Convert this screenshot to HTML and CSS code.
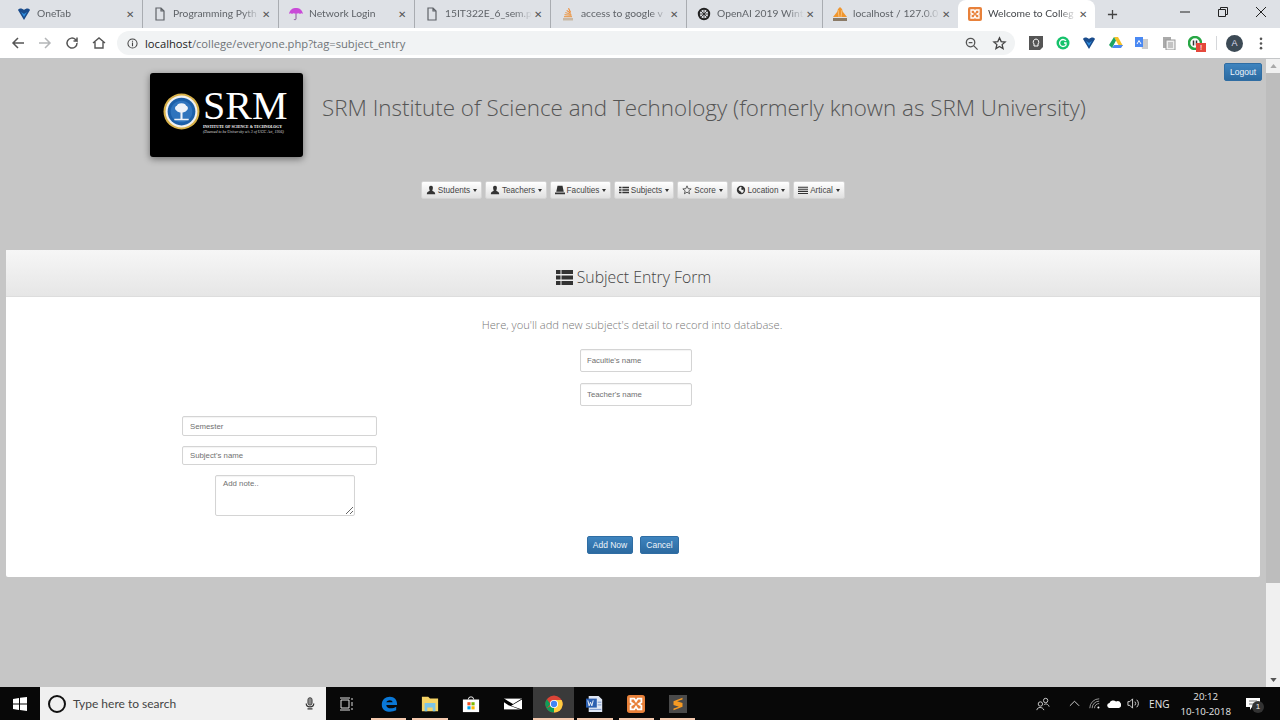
FILE: index.html
```html
<!DOCTYPE html>
<html lang="en">
<head>
    <meta charset="UTF-8">
    <title>Welcome to College</title>
    <link rel="stylesheet" href="styles.css">
</head>
<body>
    <div class="tabstrip">
        <div class="tab first">
            <svg class="fav" viewBox="0 0 14 14"><path d="M1 3c1-2 4-2 6 0 2-2 5-2 6 0L7 13z" fill="#1a4c8c"/><path d="M4 5l3 2 3-2-3 5z" fill="#2f8fe0"/></svg>
            <span class="tab-title">OneTab</span><span class="tab-x">✕</span>
        </div>
        <div class="tab">
            <svg class="fav" viewBox="0 0 14 14"><path d="M3 1h5l3 3v9H3zM8 1v3h3" fill="none" stroke="#5f6368" stroke-width="1.2"/></svg>
            <span class="tab-title">Programming Pyth</span><span class="tab-x">✕</span>
        </div>
        <div class="tab">
            <svg class="fav" viewBox="0 0 14 14"><path d="M0 7C1 2 4 1 7 1s6 1 7 6c-1-1-2-1-3 0-1-1-2-1-4 0-2-1-3-1-4 0-1-1-2-1-3 0z" fill="#c94ad8"/><path d="M7 7v5c0 1-2 1-2 0" fill="none" stroke="#8a5a9a"/></svg>
            <span class="tab-title">Network Login</span><span class="tab-x">✕</span>
        </div>
        <div class="tab">
            <svg class="fav" viewBox="0 0 14 14"><path d="M3 1h5l3 3v9H3zM8 1v3h3" fill="none" stroke="#5f6368" stroke-width="1.2"/></svg>
            <span class="tab-title">15IT322E_6_sem.p</span><span class="tab-x">✕</span>
        </div>
        <div class="tab">
            <svg class="fav" viewBox="0 0 14 14"><path d="M2 11h10v2.500H2z" fill="#c9b8a4"/><path d="M3 9h8v1.200H3zM3.500 7l7 .8v1.200l-7-.8zM4.500 5l6 2-.4 1-6-2z" fill="#e9a15c"/><path d="M6 3l4 3-.6.8-4-3zM8 1l2 4-1 .4-2-4z" fill="#f08a30"/></svg>
            <span class="tab-title">access to google v</span><span class="tab-x">✕</span>
        </div>
        <div class="tab">
            <svg class="fav" viewBox="0 0 14 14"><circle cx="7" cy="7" r="5.2" fill="none" stroke="#222" stroke-width="2"/><path d="M4 4l6 6M10 4l-6 6M7 2v10M2 7h10" stroke="#222" stroke-width=".8"/></svg>
            <span class="tab-title">OpenAI 2019 Wint</span><span class="tab-x">✕</span>
        </div>
        <div class="tab">
            <svg class="fav" viewBox="0 0 14 14"><path d="M0 10L4 5l1-3 2-2 2 2 1 3 4 5z" fill="#f0962e"/><path d="M5 3l1 7M9 3L8 10" stroke="#fbd9a8" stroke-width=".6"/><path d="M0 11h14v3H0z" fill="#8a7a66"/></svg>
            <span class="tab-title">localhost / 127.0.0</span><span class="tab-x">✕</span>
        </div>
        <div class="tab active">
            <svg class="fav" viewBox="0 0 14 14"><rect width="14" height="14" rx="2" fill="#e8813a"/><path d="M3 3h3l1 2 1-2h3v3l-2 1 2 1v3H8L7 9l-1 2H3V8l2-1-2-1z" fill="none" stroke="#fff" stroke-width="1.3"/></svg>
            <span class="tab-title">Welcome to Colleg</span><span class="tab-x">✕</span>
        </div>
        <svg class="newtab" viewBox="0 0 12 12"><path d="M6 1v10M1 6h10" stroke="#444" stroke-width="1.4"/></svg>
        <div class="win-btns">
            <svg viewBox="0 0 12 12"><path d="M1 6h10" stroke="#222"/></svg>
            <svg viewBox="0 0 12 12"><path d="M1.500 3.500h7v7h-7zM3.500 3V1.500h7v7H9" fill="none" stroke="#222"/></svg>
            <svg viewBox="0 0 12 12"><path d="M1 1l10 10M11 1L1 11" stroke="#222"/></svg>
        </div>
    </div>

    <div class="toolbar">
        <svg class="nav-ico" viewBox="0 0 16 16"><path d="M14 8H3M8 3L3 8l5 5" fill="none" stroke="#555" stroke-width="1.5"/></svg>
        <svg class="nav-ico" viewBox="0 0 16 16"><path d="M2 8h11M8 3l5 5-5 5" fill="none" stroke="#b4b6b8" stroke-width="1.5"/></svg>
        <svg class="nav-ico" viewBox="0 0 16 16"><path d="M13 8a5 5 0 1 1-1.500-3.500L13 6V2.500M13 6H9.500" fill="none" stroke="#555" stroke-width="1.500"/></svg>
        <svg class="nav-ico" viewBox="0 0 16 16"><path d="M2 8l6-5 6 5M4 7v6h8V7" fill="none" stroke="#555" stroke-width="1.4"/></svg>
        <div class="omnibox">
            <svg class="info" viewBox="0 0 12 12"><circle cx="6" cy="6" r="5" fill="none" stroke="#444" stroke-width="1.1"/><path d="M6 5v4M6 3v1.200" stroke="#444" stroke-width="1.2"/></svg>
            <span class="url"><b>localhost</b>/college/everyone.php?tag=subject_entry</span>
            <svg class="omni-ico" viewBox="0 0 16 16"><circle cx="7" cy="7" r="4.500" fill="none" stroke="#555" stroke-width="1.4"/><path d="M10.500 10.500L14.500 14.500M5 7h4" stroke="#555" stroke-width="1.4"/></svg>
            <svg class="omni-ico" viewBox="0 0 16 16"><path d="M8 2l1.800 4 4.200.4-3.200 2.800 1 4.200L8 11.200 4.200 13.400l1-4.200L2 6.400 6.200 6z" fill="none" stroke="#444" stroke-width="1.400"/></svg>
        </div>
        <div class="ext-icons">
            <svg viewBox="0 0 14 14"><path d="M0 0h14v11l-3 3H0z" fill="#555"/><path d="M7 3a3 3 0 0 1 2 5v2H5V8a3 3 0 0 1 2-5z" fill="none" stroke="#fff"/></svg>
            <svg viewBox="0 0 14 14"><circle cx="7" cy="7" r="6.500" fill="#15c26b"/><path d="M10 5a3.500 3.500 0 1 0 0 4V7H8" fill="none" stroke="#fff" stroke-width="1.300"/></svg>
            <svg viewBox="0 0 14 14"><path d="M1 3c1-2 4-2 6 0 2-2 5-2 6 0L7 13z" fill="#1a4c8c"/><path d="M4 5l3 2 3-2-3 5z" fill="#2f8fe0"/></svg>
            <svg viewBox="0 0 14 14"><path d="M5 1h4l5 9H10z" fill="#f6c026"/><path d="M5 1l2 3.500L3 12 0 9z" fill="#1da462"/><path d="M3 12l2-3h9l-2 3z" fill="#4a89f3"/></svg>
            <svg viewBox="0 0 14 14"><path d="M5 3h8v10H7z" fill="#ccc"/><rect width="8" height="10" y="1" fill="#4a89f3"/><path d="M2 8l2-3.500L6 8" fill="none" stroke="#fff"/></svg>
            <svg viewBox="0 0 14 14"><rect x="1" y="1" width="8" height="11" fill="#aaa"/><rect x="4" y="4" width="9" height="10" fill="#eee" stroke="#999"/><path d="M6 7h5M6 9h5M6 11h5" stroke="#999"/></svg>
            <span class="ext-badged">
                <svg viewBox="0 0 14 14"><circle cx="7" cy="7" r="6" fill="none" stroke="#28a745" stroke-width="2.500"/><path d="M5.500 4.500v5M8.500 4.500v5" stroke="#333" stroke-width="1.500"/></svg>
                <span class="ext-badge">!</span>
            </span>
        </div>
        <span class="tool-sep"></span>
        <span class="avatar">A</span>
        <svg class="menu-dots" viewBox="0 0 4 14"><circle cx="2" cy="2" r="1.400" fill="#555"/><circle cx="2" cy="7" r="1.400" fill="#555"/><circle cx="2" cy="12" r="1.400" fill="#555"/></svg>
    </div>

    <div class="viewport">
        <div class="page">
            <button class="btn-blue logout">Logout</button>
            <div class="brand">
                <div class="logo">
                    <svg class="seal" viewBox="0 0 36 36">
                        <circle cx="18" cy="18" r="17.500" fill="#d9b24a"/>
                        <circle cx="18" cy="18" r="15.500" fill="#f2f2f2"/>
                        <circle cx="18" cy="18" r="13.500" fill="#1c5fa8"/>
                        <circle cx="18" cy="18" r="10.500" fill="#2f74bd"/>
                        <path d="M17 19h2v6h-2zM11 25h14v1.500H11zM18 10c3 0 4 1 4.500 2.500 2 .5 2.500 3.500.5 4.500-1 1.500-3 2-5 2s-4-.5-5-2c-2-1-1.500-4 .5-4.500C14 11 15 10 18 10z" fill="#eef2f8"/>
                    </svg>
                    <div class="logo-text">
                        <div class="logo-srm">SRM</div>
                        <div class="logo-inst">INSTITUTE OF SCIENCE &amp; TECHNOLOGY</div>
                        <div class="logo-deemed">(Deemed to be University u/s 3 of UGC Act, 1956)</div>
                    </div>
                </div>
                <h1 class="site-title">SRM Institute of Science and Technology (formerly known as SRM University)</h1>
            </div>

            <div class="main-nav">
                <button class="nav-btn w61"><svg viewBox="0 0 12 12"><path d="M6 1c2 0 2.500 1.500 2.200 3.200C8 5.500 7.500 6.500 7.500 7c1 .8 3.500 1 3.500 3.500V11H1v-.5C1 8 3.500 7.800 4.500 7c0-.5-.5-1.500-.7-2.800C3.500 2.500 4 1 6 1z"/></svg> Students <i class="caret"></i></button>
                <button class="nav-btn w62"><svg viewBox="0 0 12 12"><path d="M6 1c2 0 2.500 1.500 2.200 3.200C8 5.500 7.500 6.500 7.500 7c1 .8 3.500 1 3.500 3.500V11H1v-.5C1 8 3.500 7.800 4.500 7c0-.5-.5-1.500-.7-2.800C3.500 2.500 4 1 6 1z"/></svg> Teachers <i class="caret"></i></button>
                <button class="nav-btn w61"><svg viewBox="0 0 12 12"><path d="M3 1h6l1.500 7h-9zM0 9h12v2H0z"/></svg>Faculties <i class="caret"></i></button>
                <button class="nav-btn w60"><svg viewBox="0 0 12 12"><path d="M0 2h3v2H0zM4 2h8v2H4zM0 5h3v2H0zM4 5h8v2H4zM0 8h3v2H0zM4 8h8v2H4z"/></svg>Subjects <i class="caret"></i></button>
                <button class="nav-btn w51"><svg viewBox="0 0 12 12"><path d="M6 1l1.400 3.400 3.600.3-2.800 2.300.9 3.500L6 8.600l-3.100 1.900.9-3.500L1 4.700l3.600-.3z" fill="none" stroke="#333" stroke-width=".9"/></svg> Score <i class="caret"></i></button>
                <button class="nav-btn w59"><svg viewBox="0 0 12 12"><circle cx="6" cy="6" r="5"/><path d="M5 2l2 1-1 2 2 1 1-1v3l-2 2-1-2-2-1-1-2z" fill="#eee"/></svg> Location <i class="caret"></i></button>
                <button class="nav-btn w52"><svg viewBox="0 0 12 12"><path d="M0 2h12v1.300H0zM0 4.500h12v1.300H0zM0 7h12v1.300H0zM0 9.500h12v1.300H0z"/></svg>Artical <i class="caret"></i></button>
            </div>

            <div class="panel">
                <div class="panel-heading">
                    <svg class="heading-ico" viewBox="0 0 17 15"><path d="M0 0h4.500v4H0zM5.500 0H17v4H5.500zM0 5.500h4.500v4H0zM5.500 5.500H17v4H5.500zM0 11h4.500v4H0zM5.500 11H17v4H5.500z"/></svg>
                    <span>Subject Entry Form</span>
                </div>
                <div class="panel-body">
                    <p class="lead">Here, you'll add new subject's detail to record into database.</p>
                    <input class="field small" placeholder="Facultie's name">
                    <input class="field small last" placeholder="Teacher's name">
                    <input class="field wide" placeholder="Semester">
                    <input class="field wide tight" placeholder="Subject's name">
                    <textarea class="field note" placeholder="Add note.."></textarea>
                    <div class="actions">
                        <button class="btn-blue">Add Now</button>
                        <button class="btn-blue">Cancel</button>
                    </div>
                </div>
            </div>
        </div>
        <div class="scrollbar">
            <svg viewBox="0 0 8 5"><path d="M0 5l4-5 4 5z" fill="#a8a8a8"/></svg>
            <div class="thumb"></div>
            <svg class="down" viewBox="0 0 8 5"><path d="M0 0l4 5 4-5z" fill="#555"/></svg>
        </div>
    </div>

    <div class="taskbar">
        <svg class="start" viewBox="0 0 14 14"><path d="M0 2l6-1v5.500H0zM7 .8L14 0v6.500H7zM0 7.500h6V13l-6-1zM7 7.500h7V14l-7-1z" fill="#fff"/></svg>
        <div class="searchbox">
            <span class="cortana"></span>
            <span class="search-text">Type here to search</span>
            <svg class="mic" viewBox="0 0 12 16"><rect x="3.500" y="1" width="5" height="9" rx="2.500" fill="#888" stroke="#333"/><path d="M1.500 8c0 3 2 4 4.500 4s4.500-1 4.500-4M3 14.500h6" fill="none" stroke="#333" stroke-width="1.500"/></svg>
        </div>
        <svg class="taskview" viewBox="0 0 14 14"><path d="M1 3h8v8H1zM0 1h10M0 13h10M12 1v2M12 5v4M12 11v2" fill="none" stroke="#ddd"/></svg>
        <div class="task-apps">
            <span class="app open"><svg viewBox="0 0 20 20"><path d="M2 11C2 5 6 2 11 2c5 0 8 3 8 9H7c0 4 6 5 11 2v4c-6 3-16 2-16-6zM7 8h7c0-3-6-3-7 0z" fill="#0a78d7"/></svg></span>
            <span class="app open"><svg viewBox="0 0 20 20"><path d="M1 2h7l2 2h9v14H1z" fill="#f6d365"/><path d="M4 9h12v9h-3v-4H7v4H4z" fill="#7cc4e8"/></svg></span>
            <span class="app"><svg viewBox="0 0 20 20"><path d="M7 5a3 3 0 0 1 6 0" fill="none" stroke="#fff"/><path d="M1 5h18v14H1z" fill="#fff"/><path d="M6 8h3.500v3.500H6z" fill="#f25022"/><path d="M10.500 8H14v3.500h-3.500z" fill="#7fba00"/><path d="M6 12.500h3.500V16H6z" fill="#00a4ef"/><path d="M10.500 12.500H14V16h-3.500z" fill="#ffb900"/></svg></span>
            <span class="app"><svg viewBox="0 0 20 20"><path d="M0 4h20v12H0z" fill="#fff"/><path d="M0 4l10 6 10-6v1L8 12l12 4v1L5 11.500 0 8z" fill="#000"/></svg></span>
            <span class="app open current"><svg viewBox="0 0 20 20"><circle cx="10" cy="10" r="9.500" fill="#db4437"/><path d="M10 10L1.800 15A9.500 9.500 0 0 0 10 19.500z" fill="#0f9d58"/><path d="M1.800 15A9.500 9.500 0 0 1 2 4.800L6 10z" fill="#0f9d58"/><path d="M10 5.500h8.500a9.500 9.500 0 0 1-8.500 14z" fill="#ffcd40"/><circle cx="10" cy="10" r="4.500" fill="#fff"/><circle cx="10" cy="10" r="3.500" fill="#4285f4"/></svg></span>
            <span class="app open"><svg viewBox="0 0 20 20"><path d="M3 1h11l4 4v14H3z" fill="#dfe7f5"/><path d="M0 4h12v10H0z" fill="#2b5fb0"/><path d="M2 6l1.500 6L5 8l1.500 4L8 6" fill="none" stroke="#fff"/><path d="M13 8h4M13 11h4M4 16h13" stroke="#6e8fc8"/></svg></span>
            <span class="app open"><svg viewBox="0 0 20 20"><rect width="20" height="20" rx="3" fill="#e8813a"/><path d="M4 4h4l2 3 2-3h4v4l-3 2 3 2v4h-4l-2-3-2 3H4v-4l3-2-3-2z" fill="none" stroke="#fff" stroke-width="2"/></svg></span>
            <span class="app open"><svg viewBox="0 0 20 20"><rect width="20" height="20" fill="#4a4a4a"/><path d="M15 3L5 7v4l6 2-6 2v2l10-4V9L9 7l6-2z" fill="#f59a23"/></svg></span>
        </div>
        <div class="tray">
            <svg class="people" viewBox="0 0 16 16"><circle cx="5" cy="8" r="2.500" fill="none" stroke="#ddd"/><path d="M1 15c0-4 7-4 8 0" fill="none" stroke="#ddd"/><circle cx="11" cy="4" r="2.500" fill="none" stroke="#ddd"/><path d="M9 9c2-2 5-1 6 2" fill="none" stroke="#ddd"/></svg>
            <svg class="chev" viewBox="0 0 12 7"><path d="M1 6l5-5 5 5" fill="none" stroke="#ddd"/></svg>
            <svg class="wifi" viewBox="0 0 14 14"><path d="M1 13A12 12 0 0 1 13 1M4 13a9 9 0 0 1 9-9M7 13a6 6 0 0 1 6-6" fill="none" stroke="#bbb"/><circle cx="12" cy="12" r="1.300" fill="#fff"/></svg>
            <svg class="cloud" viewBox="0 0 14 9"><path d="M3 9a2.500 2.500 0 0 1-.5-5A4 4 0 0 1 9 2.500 3 3 0 0 1 12 9z" fill="#fff"/></svg>
            <svg class="speaker" viewBox="0 0 14 14"><path d="M1 5h2l3-3v10L3 9H1zM8.500 5a3 3 0 0 1 0 4M10.500 3a6 6 0 0 1 0 8" fill="none" stroke="#ddd"/></svg>
            <span class="lang">ENG</span>
            <div class="clock"><div>20:12</div><div>10-10-2018</div></div>
            <span class="notify">
                <svg viewBox="0 0 14 12"><path d="M0 0h14v9H6l-2 3V9H0z" fill="#fff"/><path d="M3 3h8M3 6h8" stroke="#777"/></svg>
                <span class="notify-count">1</span>
            </span>
        </div>
    </div>
</body>
</html>
```

FILE: styles.css
```css
* {
    box-sizing: border-box;
}
html, body {
    height: 100%;
}
body {
    margin: 0;
    width: 1280px;
    height: 720px;
    overflow: hidden;
    display: flex;
    flex-direction: column;
    font-family: "Liberation Sans", Arial, sans-serif;
    background-color: #c6c6c6;
}

/* chrome tabs */
.tabstrip {
    height: 28px;
    flex: none;
    display: flex;
    align-items: center;
    padding-left: 7px;
    background-color: #dee1e6;
}
.tab {
    width: 136px;
    height: 28px;
    flex: none;
    display: flex;
    align-items: center;
    padding: 0 6px 0 10px;
    border-right: 1px solid #a9acb1;
    position: relative;
}
.tab:nth-child(7) {
    border-right: none;
    padding-right: 7px;
}
.fav {
    width: 14px;
    height: 14px;
    flex: none;
}
.tab-title {
    flex: 1;
    min-width: 0;
    margin-left: 6px;
    padding-bottom: 2px;
    font-family: Lato, sans-serif;
    font-size: 10.3px;
    color: #5f6368;
    white-space: nowrap;
    -webkit-mask-image: linear-gradient(to right, #000 80%, transparent 100%);
    mask-image: linear-gradient(to right, #000 80%, transparent 100%);
}
.tab-x {
    width: 12px;
    font-size: 10px;
    color: #555;
    text-align: center;
    flex: none;
}
.tab.active {
    width: 137px;
    margin-left: -1px;
    background-color: #fff;
    border-right: none;
    border-radius: 8px 8px 0 0;
}
.tab.active .tab-title {
    color: #45484c;
}
.newtab {
    width: 11px;
    height: 11px;
    margin-left: 12px;
}
.win-btns {
    display: flex;
    margin-left: auto;
    gap: 26px;
    padding-right: 13px;
    margin-top: -4px;
}
.win-btns svg {
    width: 12px;
    height: 12px;
}

/* address bar */
.toolbar {
    height: 31px;
    flex: none;
    display: flex;
    align-items: center;
    padding-left: 10px;
    background-color: #fff;
    border-bottom: 1px solid #c4c6c8;
}
.nav-ico {
    width: 16px;
    height: 16px;
    margin-right: 11px;
}
.omnibox {
    width: 898px;
    height: 24px;
    margin-left: -1px;
    display: flex;
    align-items: center;
    padding: 0 8px 0 10px;
    background-color: #f1f3f4;
    border-radius: 12px;
}
.info {
    width: 11px;
    height: 11px;
    flex: none;
}
.url {
    flex: 1;
    margin-left: 7px;
    font-family: "Open Sans", sans-serif;
    font-size: 11.2px;
    color: #6f7378;
}
.url b {
    font-weight: 400;
    color: #222;
}
.omni-ico {
    width: 15px;
    height: 15px;
    margin-left: 13px;
}
.ext-icons {
    display: flex;
    align-items: center;
    gap: 12.5px;
    margin-left: 14px;
}
.ext-icons svg {
    width: 14px;
    height: 14px;
    display: block;
}
.ext-badged {
    position: relative;
}
.ext-badge {
    position: absolute;
    left: 8px;
    top: 7px;
    width: 10px;
    height: 9px;
    background-color: #e5483c;
    color: #fff;
    font-size: 8px;
    line-height: 9px;
    text-align: center;
}
.tool-sep {
    width: 1px;
    height: 14px;
    margin-left: 14px;
    background-color: #d5d7da;
}
.avatar {
    width: 17px;
    height: 17px;
    margin-left: 9px;
    border-radius: 50%;
    background-color: #3c4a55;
    color: #dde;
    font-size: 9px;
    line-height: 17px;
    text-align: center;
}
.menu-dots {
    width: 4px;
    height: 13px;
    margin-left: 16px;
}

/* page */
.viewport {
    height: 628px;
    flex: none;
    display: flex;
}
.page {
    flex: 1;
    min-width: 0;
    position: relative;
    padding: 14px 6px 0;
    background-color: #c6c6c6;
}
.scrollbar {
    width: 14px;
    flex: none;
    display: flex;
    flex-direction: column;
    align-items: center;
    background-color: #f0f0f0;
    padding-top: 5px;
}
.scrollbar svg {
    width: 7px;
    height: 4px;
    flex: none;
}
.thumb {
    width: 14px;
    height: 510px;
    margin-top: 5px;
    background-color: #bdbdbd;
}
.scrollbar .down {
    margin-top: auto;
    margin-bottom: 5px;
}
.logout {
    position: absolute;
    top: 4px;
    right: 4px;
    width: 38px;
}
.btn-blue {
    height: 18px;
    padding: 0;
    font-family: "Liberation Sans", sans-serif;
    font-size: 8.5px;
    color: #eef4fa;
    border: 1px solid #2f6da3;
    border-radius: 2px;
    background: linear-gradient(to bottom, #3e84bf, #2c6aa0);
}
.brand {
    display: flex;
    align-items: flex-start;
    padding-left: 144px;
}
.logo {
    width: 153px;
    height: 84px;
    flex: none;
    display: flex;
    align-items: center;
    padding-left: 13px;
    background-color: #000;
    border-radius: 3px;
    box-shadow: 0 2px 7px rgba(0, 0, 0, 0.45);
}
.seal {
    width: 37px;
    height: 37px;
    flex: none;
    margin-bottom: 8px;
}
.logo-text {
    margin: 0 0 7px 3px;
    color: #fff;
    font-family: "Liberation Serif", serif;
    white-space: nowrap;
}
.logo-srm {
    font-size: 40px;
    line-height: 32px;
}
.logo-inst {
    margin-top: 3px;
    font-size: 3.9px;
    font-weight: bold;
    line-height: 4px;
}
.logo-deemed {
    font-size: 4px;
    font-style: italic;
    line-height: 5px;
    color: #ddd;
}
.site-title {
    margin: 20px 0 0 19px;
    font-family: "Open Sans", sans-serif;
    font-size: 22.4px;
    font-weight: 300;
    line-height: 30px;
    color: #555;
    white-space: nowrap;
}
.main-nav {
    display: flex;
    justify-content: center;
    gap: 3px;
    margin-top: 24px;
    padding-right: 7px;
    padding-left: 7px;
}
.nav-btn {
    height: 18px;
    padding: 0;
    display: flex;
    align-items: center;
    justify-content: center;
    gap: 2px;
    font-family: "Liberation Sans", sans-serif;
    font-size: 8.2px;
    color: #444;
    border: 1px solid #d4d4d4;
    border-radius: 2px;
    background: linear-gradient(to bottom, #fff, #e0e0e0);
}
.nav-btn svg {
    width: 10px;
    height: 10px;
    flex: none;
    fill: #333;
}
.w51 { width: 51px; }
.w52 { width: 52px; }
.w59 { width: 59px; }
.w60 { width: 60px; }
.w61 { width: 61px; }
.w62 { width: 62px; }
.caret {
    width: 0;
    height: 0;
    margin-left: 1px;
    border-top: 3px solid #333;
    border-left: 2.5px solid transparent;
    border-right: 2.5px solid transparent;
}
.panel {
    width: 1254px;
    margin-top: 51px;
    background-color: #fff;
    border-radius: 2px;
}
.panel-heading {
    height: 47px;
    display: flex;
    align-items: center;
    justify-content: center;
    gap: 4px;
    padding: 8px 0 0 1px;
    font-family: "Open Sans", sans-serif;
    font-size: 15.8px;
    font-weight: 300;
    color: #444;
    background: linear-gradient(to bottom, #f6f6f6, #e6e6e6);
    border-bottom: 1px solid #ddd;
}
.heading-ico {
    width: 17px;
    height: 15px;
    fill: #333;
}
.panel-body {
    height: 280px;
    display: flex;
    flex-direction: column;
    padding-top: 21px;
}
.lead {
    margin: 0 0 17px;
    padding-right: 2px;
    text-align: center;
    font-family: "Open Sans", sans-serif;
    font-size: 11.15px;
    font-weight: 300;
    line-height: 14px;
    color: #777;
}
.field {
    display: block;
    font-family: "Liberation Sans", sans-serif;
    font-size: 7.8px;
    color: #555;
    border: 1px solid #d4d4d4;
    border-radius: 2px;
    background-color: #fff;
    outline: none;
    box-shadow: inset 0 1px 1px rgba(0, 0, 0, 0.05);
}
.field::placeholder {
    color: #707070;
    opacity: 1;
}
.small {
    width: 112px;
    height: 23px;
    margin: 0 0 11px 574px;
    padding: 0 6px;
}
.small.last {
    margin-bottom: 10px;
}
.wide {
    width: 195px;
    height: 20px;
    margin: 0 0 10px 176px;
    padding: 0 7px;
}
.wide.tight {
    height: 19px;
}
.note {
    width: 140px;
    height: 41px;
    margin-left: 209px;
    padding: 3px 7px;
    resize: vertical;
}
.actions {
    display: flex;
    gap: 7px;
    margin: 20px 0 0 581px;
}
.actions .btn-blue:first-child {
    width: 46px;
}
.actions .btn-blue:last-child {
    width: 39px;
}

/* windows taskbar */
.taskbar {
    height: 33px;
    flex: none;
    display: flex;
    align-items: center;
    background-color: #080808;
}
.start {
    width: 14px;
    height: 14px;
    margin: 0 13px;
    flex: none;
}
.searchbox {
    width: 286px;
    height: 33px;
    flex: none;
    display: flex;
    align-items: center;
    padding: 0 11px 0 8px;
    background-color: #f0f0f0;
}
.cortana {
    width: 18px;
    height: 18px;
    flex: none;
    border: 2.5px solid #111;
    border-radius: 50%;
}
.search-text {
    flex: 1;
    margin-left: 7px;
    font-family: Lato, sans-serif;
    font-size: 12px;
    color: #444;
}
.mic {
    width: 10px;
    height: 15px;
}
.taskview {
    width: 14px;
    height: 14px;
    margin-left: 14px;
    flex: none;
}
.task-apps {
    display: flex;
    margin-left: 14px;
    height: 33px;
}
.app {
    width: 41.3px;
    height: 33px;
    display: flex;
    align-items: center;
    justify-content: center;
    position: relative;
}
.app svg {
    width: 18px;
    height: 18px;
}
.app.open::after {
    content: "";
    position: absolute;
    left: 3px;
    right: 3px;
    bottom: 0;
    height: 2px;
    background-color: #f4c9ae;
}
.app.current {
    background-color: #3a3a3a;
}
.app.current::after {
    left: 0;
    right: 0;
}
.tray {
    display: flex;
    align-items: center;
    margin-left: auto;
    color: #e6e6e6;
}
.people {
    width: 14px;
    height: 14px;
}
.chev {
    width: 11px;
    height: 7px;
    margin-left: 18.5px;
}
.wifi {
    width: 11px;
    height: 11px;
    margin-left: 9px;
}
.cloud {
    width: 14px;
    height: 9px;
    margin-left: 7.5px;
}
.speaker {
    width: 13px;
    height: 13px;
    margin-left: 5.5px;
}
.lang {
    margin-left: 9.5px;
    font-family: "Open Sans", sans-serif;
    font-size: 10px;
}
.clock {
    margin-left: 11px;
    text-align: center;
    font-family: "Open Sans", sans-serif;
    font-size: 9.7px;
    line-height: 15px;
}
.notify {
    position: relative;
    width: 14px;
    height: 12px;
    margin: 0 20px 0 15px;
}
.notify svg {
    width: 14px;
    height: 12px;
    display: block;
}
.notify-count {
    position: absolute;
    left: 6px;
    top: 3px;
    width: 12px;
    height: 12px;
    border-radius: 50%;
    background-color: #333;
    font-size: 8px;
    line-height: 12px;
    text-align: center;
    color: #eee;
}
```
